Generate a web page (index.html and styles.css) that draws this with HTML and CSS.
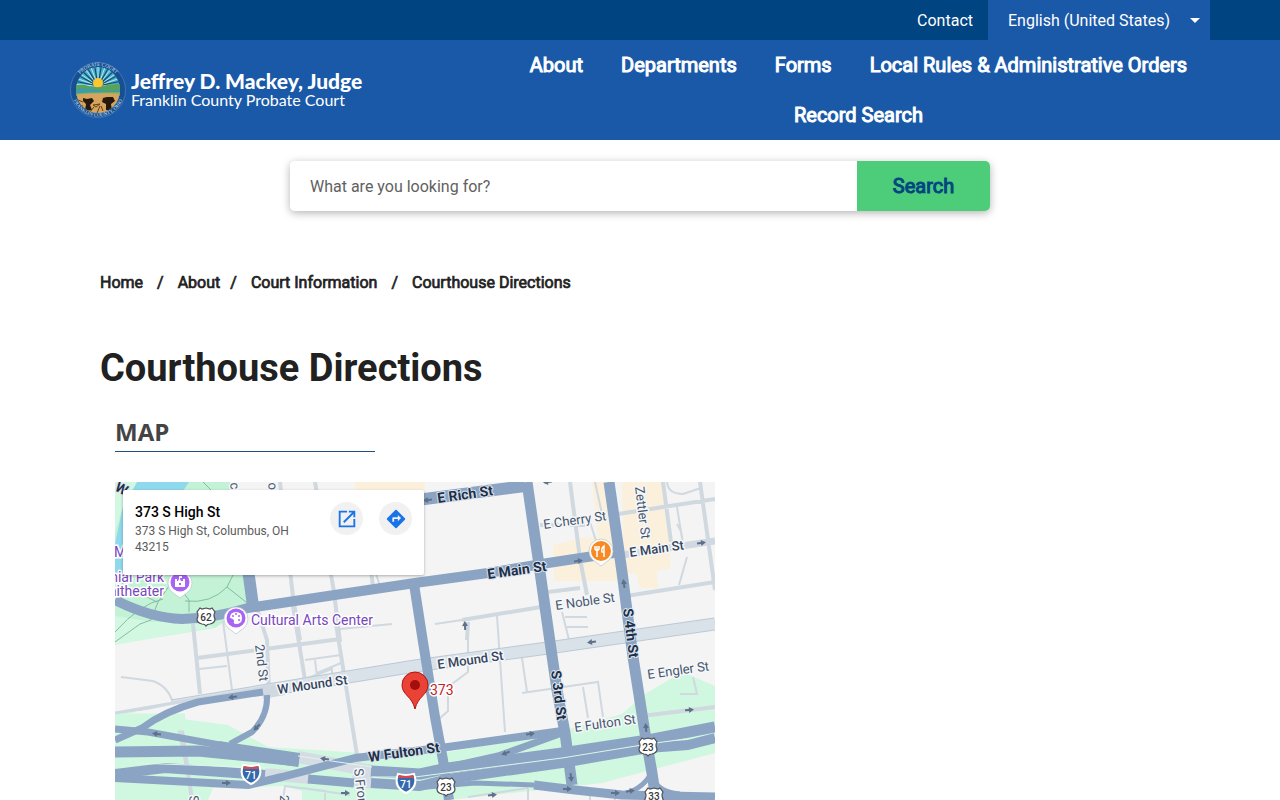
FILE: index.html
```html
<!DOCTYPE html>
<html lang="en">
<head>
<meta charset="utf-8">
<meta name="viewport" content="width=device-width, initial-scale=1">
<title>Courthouse Directions</title>
<link rel="stylesheet" href="styles.css">
</head>
<body>
<div class="topbar">
  <div class="container topbar-inner">
    <a class="contact" href="#">Contact</a>
    <div class="language">
      <select class="language-select" aria-label="Language"><option>English (United States)</option></select>
      <svg class="caret" width="10" height="5" viewBox="0 0 10 5" aria-hidden="true"><path d="M0 0h10L5 5z" fill="#fff"/></svg>
    </div>
  </div>
</div>
<header class="header">
  <div class="container header-inner">
    <a class="brand" href="#">
      <svg class="seal" viewBox="0 0 56 56" aria-hidden="true">
        <defs>
          <clipPath id="disc"><ellipse cx="28" cy="28" rx="22" ry="23"/></clipPath>
          <path id="ring-top" d="M4 28a24 24 0 0 1 48 0"/>
          <path id="ring-bottom" d="M1.500 28a26.500 26.500 0 0 0 53 0"/>
        </defs>
        <circle cx="28" cy="28" r="27.500" fill="#174f91" stroke="#6f94c6" stroke-width=".5"/>
        <g clip-path="url(#disc)">
          <rect width="56" height="56" fill="#45aed0"/>
          <path d="M28 24L0 22M28 24L0 14M28 24L2 6M28 24L10 0M28 24L19 0M28 24L28 0M28 24L37 0M28 24L46 0M28 24L54 6M28 24L56 14M28 24L56 22" stroke="#b9e6ea" stroke-width="1"/>
          <path d="M28 24L0 18M28 24L2 10M28 24L6 3M28 24L14 0M28 24L24 0M28 24L32 0M28 24L42 0M28 24L50 3M28 24L54 10M28 24L56 18" stroke="#174c68" stroke-width="1.200"/>
          <circle cx="28" cy="21" r="5" fill="#ffc72e"/>
          <path d="M0 24q8-2 15-1 8 3 15 2 12-5 26-2v11H0z" fill="#57a35b"/>
          <path d="M0 28q15-3 29 0t27-2v8H0z" fill="#3e9ca9"/>
          <path d="M0 32q20-2 56-2v4H0z" fill="#7bb365"/>
          <path d="M0 33q28-3 56-1v24H0z" fill="#d6a45d"/>
          <path d="M13 36l4 1 5-1 2 3-4 4 2 5-7 1 1-7-3-3zM33 36l4-1 6 0 2 4-4 3 1 7-6-1 0-6-4-2z" fill="#27190e"/>
          <path d="M5 43l8 1M23 43l7-1-4 3zM44 45l6-3M20 50l4-5M27 51l3-7M33 49l-2-5M8 38l5 2M12 48l4-2M38 49l4-1" stroke="#60401d" stroke-width="1" fill="none"/>
        </g>
        <g class="seal-text"><text><textPath href="#ring-top" startOffset="50%">PROBATE COURT</textPath></text>
        <text><textPath href="#ring-bottom" startOffset="50%">FRANKLIN COUNTY, OHIO</textPath></text></g>
      </svg>
      <span class="brand-text"><span class="brand-name">Jeffrey D. Mackey, Judge</span><span class="brand-court">Franklin County Probate Court</span></span>
    </a>
    <nav class="nav" aria-label="Main">
      <a href="#">About</a><a href="#">Departments</a><a href="#">Forms</a><a href="#">Local Rules &amp; Administrative Orders</a><a href="#">Record Search</a>
    </nav>
  </div>
</header>
<form class="search">
  <input class="search-input" type="text" placeholder="What are you looking for?" aria-label="What are you looking for?">
  <button class="search-button" type="button">Search</button>
</form>
<main class="container main">
  <nav class="crumbs" aria-label="Breadcrumb">
    <a href="#">Home</a><span class="slash">/</span><a href="#">About</a><span class="slash slash-near">/</span><a href="#">Court Information</a><span class="slash">/</span><span>Courthouse Directions</span>
  </nav>
  <h1>Courthouse Directions</h1>
  <section class="map-section">
    <h2>MAP</h2>
    <div class="map">
      <svg class="map-canvas" viewBox="0 0 600 318" role="img" aria-label="Map of 373 S High St">
        <defs>
          <path id="arrow" d="M-4-1h4v-2L5 0 0 3V1h-4z" fill="#5f7189"/>
          <g id="interstate"><path d="M-8-8q8 2 16 0Q13 5 0 11-13 5-8-8z" fill="#3568ad" stroke="#fff" stroke-width="2"/><path d="M-7-7q7 2 14 0l1 3H-8z" fill="#d9484c"/></g>
          <path id="us-shield" d="M-6-9l2 1 4-1 4 1 2-1 3 4q-2 3 0 7 0 4-5 5-3 0-4 2-1-2-4-2-5-1-5-5 2-4 0-7z" fill="#fff" stroke="#4b4f55" stroke-width="1.200"/>
        </defs>
        <rect width="600" height="318" fill="#f4f4f4"/>
        <!-- parks and water -->
        <path d="M0 0H115L128 85 135 122 100 146 0 162z" fill="#c3f2d7"/>
        <path d="M0 134L38 140 74 140 100 145 0 163z" fill="#d2f8e1"/>
        <path d="M22 0H74L66 12H12L8 80 10 95H0V62L8 24z" fill="#8fd9ec"/>
        <path d="M0 0H22L8 24 0 50z" fill="#d2f8e1"/>
        <path d="M240 0H310V8H240z" fill="#faf0dc"/>
        <path d="M0 230L30 230 60 236 113 243 153 265 247 271 333 270 443 250 507 232 530 212 567 190 600 204V271L487 301 333 318H187V309L167 304 98 306 93 318H0z" fill="#d0f7df"/>
        <path d="M477 0H495L505 70 509 91 500 99H439L438 63 467 56 483 55zM507 0H548L556 86 542 89 543 106H525L521 91 509 92z" fill="#faf0dc"/>
        <!-- park footpaths -->
        <g fill="none" stroke="#83bca5" stroke-width="1">
          <path d="M0 150Q25 122 48 117M0 160L25 142 36 138 43 120 54 104M70 119Q96 122 112 105L118 93M112 105L136 124M74 130V118L60 100M88 0L96 8M2 98Q20 110 42 120"/>
        </g>
        <!-- side streets -->
        <g fill="none" stroke="#d0d8e0" stroke-width="4">
          <path d="M165 0L178 115 185 158M200 0L219 110 225 160M252 60L258 104M78 142L85 212M142 127L152 158 154 210M177 118L190 198M221 142L242 273M82 176L225 157M57 222L66 242 77 318M353 140L352 158M347 138L432 124M455 0L465 77 472 113M503 32L600 17M425 43H470M505 115L600 100M548 0L556 60M585 0L600 108M433 110L465 106M527 234L600 225"/>
        </g>
        <g fill="none" stroke="#d0d8e0" stroke-width="2">
          <path d="M108 139L117 208M225 147L277 142M84 187L112 184M190 178L226 173M200 178L202 195M202 191L226 181M190 197L217 187V193M6 195L38 199Q55 205 59 225L76 310M35 226L37 238 22 245M257 80L265 104M382 134L390 250M320 142L347 138M353 158V190L333 205V229L324 237M407 176L412 210M407 211L483 200 488 235M468 205L473 236M447 130L454 158M450 135H472M452 145H473M475 40L483 65M562 42Q570 55 566 62M562 25L568 62M572 75L564 103M552 0Q553 12 568 12L586 6M480 0L488 36M0 231L57 224M168 318L170 304 210 309V318M187 306L235 313M578 195L582 212H565M413 306V318M475 310V318M500 314V318M353 315L413 306"/>
        </g>
        <path d="M507 73L600 59" stroke="#d0d9e2" stroke-width="7"/>
        <g fill="none"><path d="M57 224L147 209 233 195 300 184 433 166 600 142" stroke="#bcc9d5" stroke-width="13"/><path d="M57 224L147 209 233 195 300 184 433 166 600 142" stroke="#d9e2e9" stroke-width="11"/></g>
        <path d="M0 241L70 227 152 214" stroke="#f4f4f4" stroke-width="13" fill="none"/><path d="M0 240L70 240" stroke="#d0f7df" stroke-width="17" fill="none"/><path d="M0 231L70 219 148 206" stroke="#d0d8e0" stroke-width="3" fill="none"/><path d="M146 204L170 201V213L148 217z" fill="#d0d9e2"/>
        <path d="M183 275L257 289M150 292L195 296M237 297L257 301" stroke="#d5dce4" stroke-width="12"/>
        <!-- arterials and freeways -->
        <g fill="none" stroke="#8ba4c3" stroke-linejoin="round">
          <path d="M302 18L410 4" stroke-width="12"/>
          <path d="M412 0L425 90 435 160 442 208 450 251 457 303" stroke-width="11"/>
          <path d="M494 0L507 90 518 175 530 251 537 291 541 318" stroke-width="11"/>
          <path d="M299 102L308 160 320 235 328 278 334 318" stroke-width="10"/>
          <path d="M0 118Q35 136 67 137 100 136 133 126L213 114 300 101 373 91 433 81 505 70" stroke-width="10"/>
          <path d="M132 80L138 124" stroke-width="12"/>
          <path d="M148 210L83 220Q50 229 27 246L0 258" stroke-width="7"/>
          <path d="M152 213Q153 234 137 250L115 262" stroke-width="6"/>
          <path d="M0 247L33 250 110 264 155 274" stroke-width="7"/>
          <path d="M0 270L83 269 184 279" stroke-width="11"/>
          <path d="M103 266L184 278" stroke-width="14"/>
          <path d="M0 292L50 286 150 293" stroke-width="10"/>
          <path d="M0 296L133 303 167 295 240 276 333 265 447 249" stroke-width="8"/>
          <path d="M193 297L239 301" stroke-width="9"/>
          <path d="M256 289L305 292 333 286 447 271 533 258 600 245" stroke-width="11"/>
          <path d="M256 301L305 304 333 297 447 281 533 266 573 263 600 256" stroke-width="10"/>
          <path d="M447 251L383 274 329 286" stroke-width="7"/>
          <path d="M300 306L360 301 419 303" stroke-width="5"/><path d="M419 303L460 308 507 313 600 315" stroke-width="9"/>
          <path d="M505 312Q525 310 536 292M540 300Q546 310 565 312" stroke-width="5"/>
        </g>
        <g fill="none" stroke="#dff5eb" stroke-width="1"><path d="M257 295H300L447 276 533 262 570 257M20 281L155 286M183 274L257 285"/></g>
        <g>
          <use href="#arrow" transform="translate(313 18) rotate(172)"/><use href="#arrow" transform="translate(433 0) rotate(172)"/><use href="#arrow" transform="translate(463 79) rotate(-8)"/><use href="#arrow" transform="translate(586 61) rotate(-8)"/><use href="#arrow" transform="translate(509 102) rotate(-97)"/><use href="#arrow" transform="translate(350 144) rotate(-93)"/><use href="#arrow" transform="translate(477 160) rotate(172)"/><use href="#arrow" transform="translate(118 215) rotate(172)"/><use href="#arrow" transform="translate(142 245) rotate(135)"/><use href="#arrow" transform="translate(42 252) rotate(188)"/><use href="#arrow" transform="translate(111 301)"/><use href="#arrow" transform="translate(210 277) rotate(188)"/><use href="#arrow" transform="translate(230 311)"/><use href="#arrow" transform="translate(415 252) rotate(-8)"/><use href="#arrow" transform="translate(391 271) rotate(160)"/><use href="#arrow" transform="translate(574 228) rotate(-5)"/><use href="#arrow" transform="translate(531 246) rotate(-95)"/><use href="#arrow" transform="translate(456 295) rotate(83)"/><use href="#arrow" transform="translate(452 307)"/><use href="#arrow" transform="translate(500 311)"/><use href="#arrow" transform="translate(515 309) rotate(-10)"/><use href="#arrow" transform="translate(377 313) rotate(-6)"/>
        </g>
        <g class="street">
          <text class="major" transform="translate(323 21) rotate(-8)">E Rich St</text>
          <text class="major" transform="translate(373 97) rotate(-8)">E Main St</text>
          <text class="medium" transform="translate(515 75) rotate(-8)">E Main St</text>
          <text transform="translate(429 47) rotate(-8)">E Cherry St</text>
          <text transform="translate(441 128) rotate(-8)">E Noble St</text>
          <text transform="translate(520 5) rotate(83)">Zettler St</text>
          <text class="major" transform="translate(508 127) rotate(83)">S 4th St</text>
          <text class="major" transform="translate(436 189) rotate(83)">S 3rd St</text>
          <text class="medium" transform="translate(163 212) rotate(-8)">W Mound St</text>
          <text class="medium" transform="translate(323 187) rotate(-8)">E Mound St</text>
          <text transform="translate(140 163) rotate(83)">2nd St</text>
          <text transform="translate(533 197) rotate(-8)">E Engler St</text>
          <text transform="translate(460 250) rotate(-8)">E Fulton St</text>
          <text class="major" transform="translate(254 280) rotate(-8)">W Fulton St</text>
          <text transform="translate(239 287) rotate(83)">S Front St</text>
          <text class="major" transform="translate(-1 8) rotate(28)">W</text>
          <text transform="translate(115 1) rotate(83)">c</text><text transform="translate(153 1) rotate(83)">o</text>
          <text transform="translate(165 313) rotate(90)">2nd</text><text transform="translate(74 314) rotate(83)">S</text>
        </g>
        <g class="place"><text x="-1" y="75">M</text><text x="49" y="100" text-anchor="end">Bicentennial Park</text><text x="49" y="114" text-anchor="end">Amphitheater</text><text x="136" y="143">Cultural Arts Center</text></g>
        <g class="shield-text">
          <use href="#us-shield" x="91" y="135"/><text x="91" y="139">62</text><use href="#us-shield" x="331" y="305"/><text x="331" y="309">23</text><use href="#us-shield" x="533" y="265"/><text x="533" y="269">23</text><use href="#us-shield" x="539" y="315"/><text x="539" y="318">33</text>
          <use href="#interstate" x="136" y="291"/><text class="on-blue" x="136" y="297">71</text><use href="#interstate" x="291" y="300"/><text class="on-blue" x="291" y="306">71</text>
        </g>
        <path d="M65 116l-8-6a12 12 0 1 1 16 0z" fill="#fff" stroke="#bcc4ce" stroke-width=".7"/><circle cx="65" cy="100" r="9.500" fill="#aa64f4"/><path fill-rule="evenodd" d="M60 97h2v2h1l1-2v-3h3v2h-2v1l1 2h2v-2h2v8H60zM64 101v2h2v-2z" fill="#fff"/>
        <path d="M121 152l-8-6a12 12 0 1 1 16 0z" fill="#fff" stroke="#bcc4ce" stroke-width=".7"/><circle cx="121" cy="136" r="9.500" fill="#aa64f4"/><path d="M115 136q0-6 6-6t6 6q0 6-6 6-3 0-2-3 0-2-4-3z" fill="#fff"/><g fill="#aa64f4"><circle cx="118" cy="134" r="1"/><circle cx="121" cy="132" r="1"/><circle cx="124" cy="134" r="1"/><circle cx="124" cy="138" r="1"/></g>
        <path d="M486 84l-8-6a12 12 0 1 1 16 0z" fill="#fff" stroke="#bcc4ce" stroke-width=".7"/><circle cx="486" cy="69" r="10" fill="#f68a25"/><path d="M482 64v4m-2-4v3q2 3 4 0v-3m-2 4v7m7-11q-3 2-2 6h2zm0 5v6" fill="none" stroke="#fff" stroke-width="1.500"/>
        <path d="M300 227C297 214 287 213 287 203a13 13 0 1 1 26 0C313 213 303 214 300 227z" fill="#ea4335" stroke="#b31412" stroke-width="1"/><circle cx="300" cy="203" r="5" fill="#a50e0e"/>
        <text class="pin-label" x="315" y="213">373</text>
      </svg>
      <div class="card">
        <div class="address"><strong>373 S High St</strong><span>373 S High St, Columbus, OH 43215</span></div>
        <a class="round" href="#" aria-label="Open in a larger map"><svg width="22" height="22" viewBox="0 0 24 24"><path fill="#1a73e8" d="M19 19H5V5h7V3H3v18h18v-9h-2v7zM14 3v2h3.590l-9.830 9.830 1.410 1.410L19 6.410V10h2V3z"/></svg></a>
        <a class="round" href="#" aria-label="Directions"><svg width="22" height="22" viewBox="0 0 24 24"><path fill="#1a73e8" fill-rule="evenodd" d="M21.710 11.290l-9-9a1 1 0 0 0-1.420 0l-9 9a1 1 0 0 0 0 1.420l9 9a1 1 0 0 0 1.420 0l9-9a1 1 0 0 0 0-1.420zM14 14.500V12h-4v3H8v-4a1 1 0 0 1 1-1h5V7.500l3.500 3.500z"/></svg></a>
      </div>
    </div>
  </section>
</main>
</body>
</html>
```
FILE: styles.css
```css
* { box-sizing: border-box; }
body { margin: 0; background: #fff; color: #212121; font: 16px/20px Roboto, sans-serif; }
a { color: inherit; text-decoration: none; }
.container { width: 100%; max-width: 1140px; margin: 0 auto; }
.topbar { background: #004582; color: #fff; }
.topbar-inner { display: flex; justify-content: flex-end; align-items: stretch; }
.contact { padding: 11px 15px 9px; }
.language { position: relative; width: 222px; background: #1a59a8; }
.language-select { display: block; width: 100%; height: 40px; padding: 2px 20px 0; border: 0; background: transparent; color: #fff; font: 16px/20px Roboto, sans-serif; appearance: none; }
.language-select option { color: #212121; }
.caret { position: absolute; right: 10px; top: 18px; pointer-events: none; }
.header { background: #1a59a8; color: #fff; }
.header-inner { display: flex; align-items: center; justify-content: space-between; }
.brand { display: flex; align-items: center; gap: 5px; }
.seal { display: block; width: 56px; height: 56px; }
.seal-text { fill: #d5e1f1; font: 5px "Liberation Serif", serif; text-anchor: middle; }
.brand-text { display: flex; flex-direction: column; font-family: Lato, sans-serif; white-space: nowrap; }
.brand-name { font-size: 21px; line-height: 20px; font-weight: 900; }
.brand-court { font-size: 16px; line-height: 18px; }
.nav { display: flex; flex-wrap: wrap; justify-content: center; width: 703px; }
.nav a { padding: 0 19px; font-size: 20px; line-height: 50px; -webkit-text-stroke: 1px; }
.search { display: flex; width: 700px; max-width: 100%; margin: 21px auto 0; border-radius: 5px; box-shadow: 0 2px 8px rgba(0, 0, 0, .3); overflow: hidden; }
.search-input { flex: 1; min-width: 0; height: 50px; padding: 0 20px; border: 0; font: 16px/20px Roboto, sans-serif; }
.search-input::placeholder { color: #616161; opacity: 1; }
.search-button { width: 133px; border: 0; background: #4dcd7a; color: #004582; font: 20px/24px Roboto, sans-serif; -webkit-text-stroke: 1px; }
.main { padding: 62px 30px 0; }
.crumbs { display: flex; flex-wrap: wrap; line-height: 20px; -webkit-text-stroke: .7px; }
.slash { padding: 0 14px; }
.slash-near { padding-left: 10px; }
h1 { margin: 51px 0 0; font-size: 38px; line-height: 48px; font-weight: 700; }
.map-section { padding: 24px 15px 0; }
h2 { width: 260px; margin: 0 0 30px; padding-bottom: 3px; border-bottom: 1px solid #1f517d; color: #444; font: 700 24px/32px "Open Sans", sans-serif; }
.map { position: relative; width: 100%; max-width: 600px; overflow: hidden; }
.map-canvas { display: block; width: 100%; }
.street { font: 13px Roboto, sans-serif; fill: #46566d; stroke: #f5f7f9; stroke-width: 3px; paint-order: stroke; stroke-linejoin: round; }
.street .medium { font-weight: 500; fill: #35455d; }
.street .major { font-size: 14px; font-weight: 700; fill: #202f49; stroke: #dce4ed; stroke-width: 2px; }
.place { font: 14px Roboto, sans-serif; fill: #7846bd; stroke: #fff; stroke-width: 3px; paint-order: stroke; }
.shield-text { font: 500 10px Roboto, sans-serif; text-anchor: middle; fill: #37393c; }
.shield-text .on-blue { fill: #fff; }
.pin-label { font: 14px Roboto, sans-serif; fill: #c5221f; stroke: #fff; stroke-width: 3px; paint-order: stroke; }
.card { position: absolute; left: 8px; top: 8px; display: flex; align-items: flex-start; gap: 16px; width: 301px; height: 85px; padding: 12px; background: #fff; border-radius: 2px; box-shadow: 0 1px 3px rgba(0, 0, 0, .3); }
.address { flex: 1; padding-top: 2px; font-size: 12px; line-height: 16px; color: #5b5b5b; }
.address strong { display: block; margin-bottom: 3px; color: #000; font-size: 14px; line-height: 16px; font-weight: 500; }
.round { display: flex; align-items: center; justify-content: center; width: 33px; height: 33px; border-radius: 50%; background: #f1f1f2; }
```
